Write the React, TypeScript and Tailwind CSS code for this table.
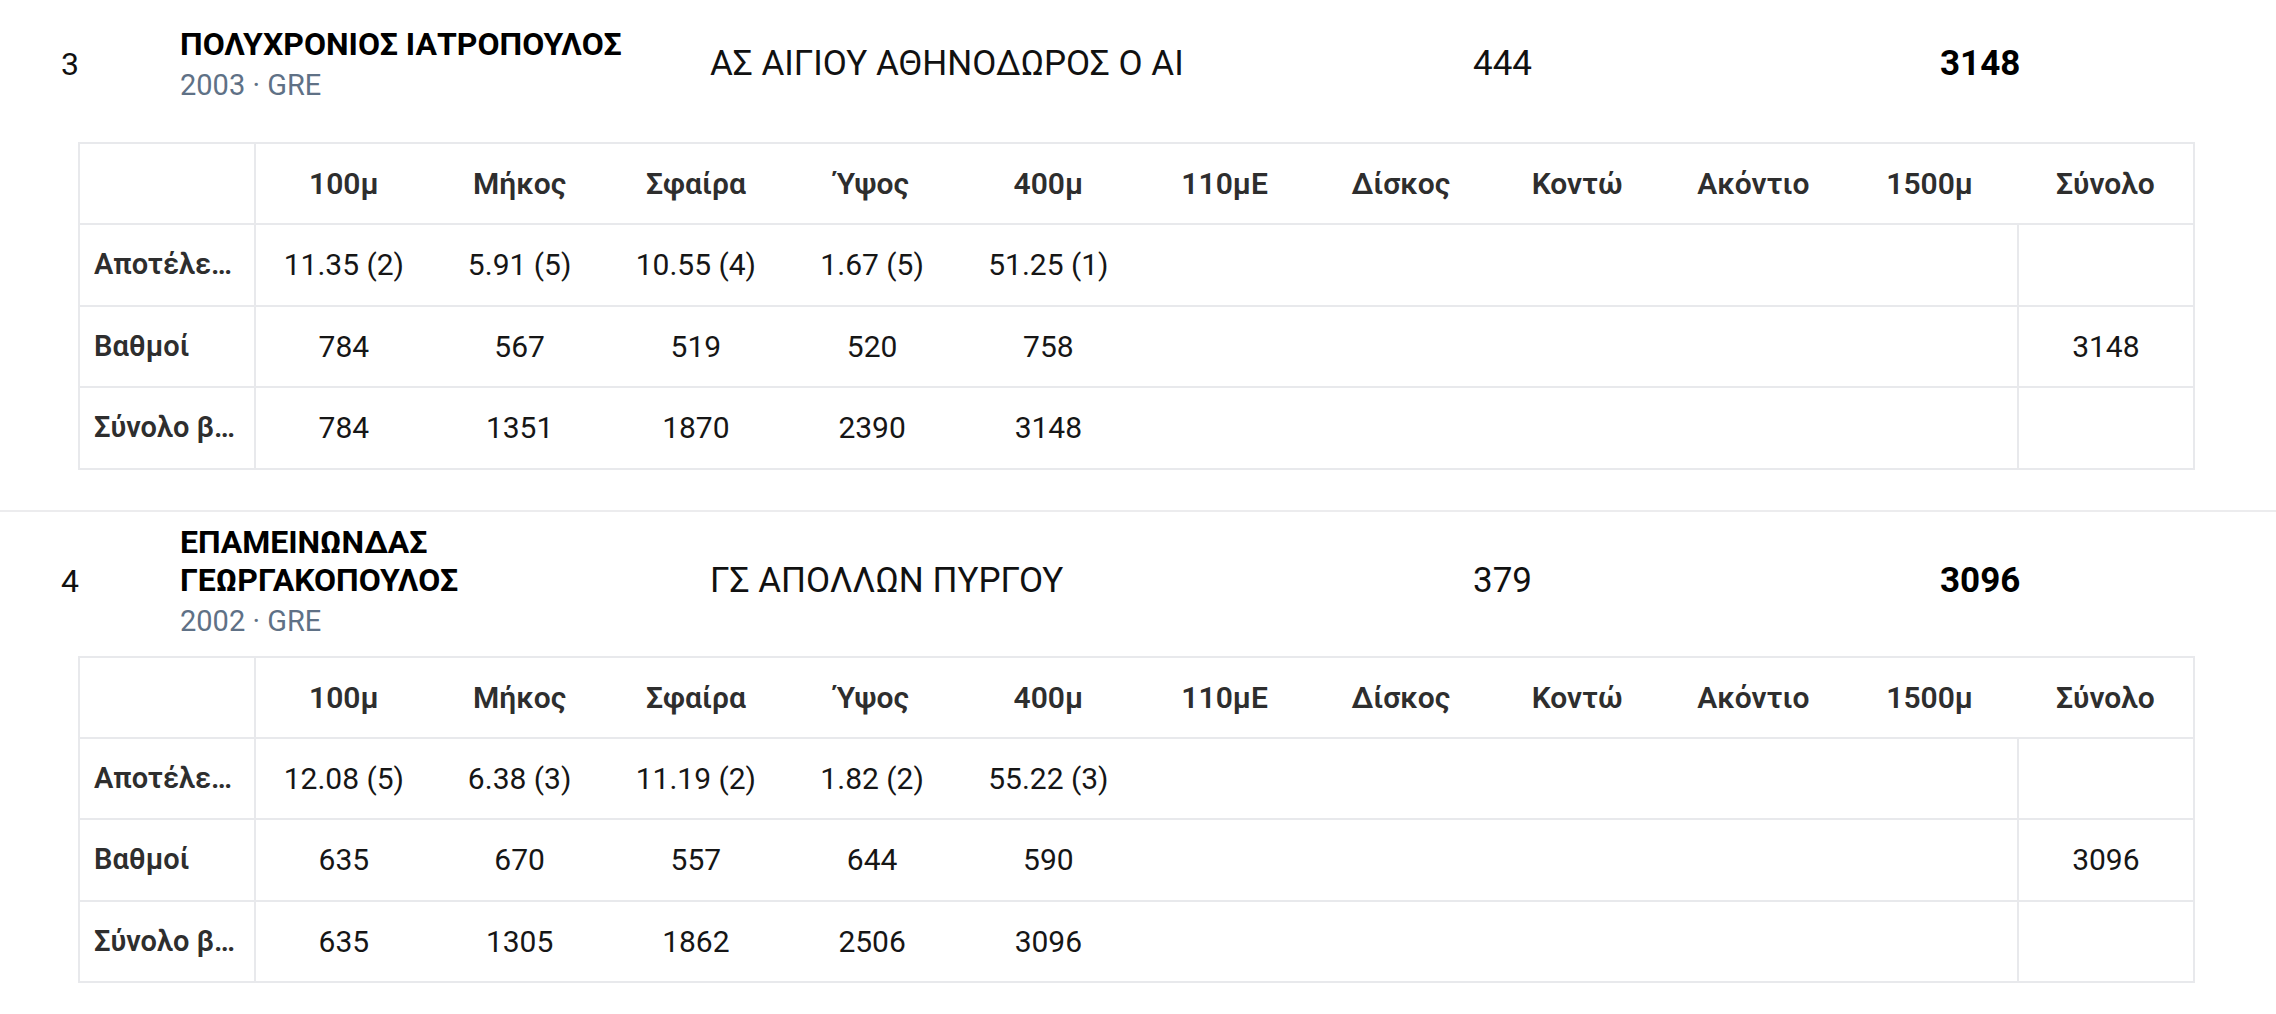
import { memo } from 'react';

interface Athlete {
  rank: number;
  name: string;
  year: number;
  nation: string;
  club: string;
  points: number;
  total: number;
  results: string[];
  scores: number[];
  cumulative: number[];
}

const EVENTS = ['100μ', 'Μήκος', 'Σφαίρα', 'Ύψος', '400μ', '110μΕ', 'Δίσκος', 'Κοντώ', 'Ακόντιο', '1500μ'];

const athletes: Athlete[] = [
  {
    rank: 3,
    name: 'ΠΟΛΥΧΡΟΝΙΟΣ ΙΑΤΡΟΠΟΥΛΟΣ',
    year: 2003,
    nation: 'GRE',
    club: 'ΑΣ ΑΙΓΙΟΥ ΑΘΗΝΟΔΩΡΟΣ Ο ΑΙ',
    points: 444,
    total: 3148,
    results: ['11.35 (2)', '5.91 (5)', '10.55 (4)', '1.67 (5)', '51.25 (1)'],
    scores: [784, 567, 519, 520, 758],
    cumulative: [784, 1351, 1870, 2390, 3148],
  },
  {
    rank: 4,
    name: 'ΕΠΑΜΕΙΝΩΝΔΑΣ ΓΕΩΡΓΑΚΟΠΟΥΛΟΣ',
    year: 2002,
    nation: 'GRE',
    club: 'ΓΣ ΑΠΟΛΛΩΝ ΠΥΡΓΟΥ',
    points: 379,
    total: 3096,
    results: ['12.08 (5)', '6.38 (3)', '11.19 (2)', '1.82 (2)', '55.22 (3)'],
    scores: [635, 670, 557, 644, 590],
    cumulative: [635, 1305, 1862, 2506, 3096],
  },
];

const pad = (values: (string | number)[]) =>
  EVENTS.map((_, i) => (values[i] !== undefined ? String(values[i]) : ''));

const ScoreTable = ({ athlete }: { athlete: Athlete }) => {
  const rows = [
    { label: 'Αποτέλεσμα', cells: pad(athlete.results), total: '' },
    { label: 'Βαθμοί', cells: pad(athlete.scores), total: String(athlete.total) },
    { label: 'Σύνολο βαθμών', cells: pad(athlete.cumulative), total: '' },
  ];

  return (
    <table className="w-full table-fixed border-collapse border-2 border-[#e8e9ec]">
      <thead>
        <tr className="h-[81px] text-[30px]">
          <th className="border-r-2 border-b-2 border-[#e8e9ec]" />
          {EVENTS.map((ev) => (
            <th key={ev} className="border-b-2 border-[#e8e9ec] font-semibold text-[#2e2e2e] text-center">
              {ev}
            </th>
          ))}
          <th className="border-b-2 border-[#e8e9ec] font-semibold text-[#2e2e2e] text-center">Σύνολο</th>
        </tr>
      </thead>
      <tbody>
        {rows.map((row, ri) => (
          <tr key={row.label} className={`h-[81.5px] text-[30px] ${ri < rows.length - 1 ? 'border-b-2 border-[#e8e9ec]' : ''}`}>
            <td className="border-r-2 border-[#e8e9ec] px-[14px] text-[29px] font-semibold text-[#2e2e2e] truncate">
              {row.label}
            </td>
            {row.cells.map((c, i) => (
              <td key={i} className="text-center text-[#161616]">
                {c}
              </td>
            ))}
            <td className="border-l-2 border-[#e8e9ec] text-center text-[#161616]">{row.total}</td>
          </tr>
        ))}
      </tbody>
    </table>
  );
};

const AthleteBlock = memo(({ athlete, first }: { athlete: Athlete; first: boolean }) => {
  return (
    <section className={`pb-[40px] ${first ? '' : 'border-t-2 border-[#ececee]'}`}>
      <div className={`flex items-center min-h-[126px] ${first ? 'pt-[2px]' : 'pt-[11px]'}`}>
        <div className="w-[140px] text-center text-[32px] text-[#111]">{athlete.rank}</div>
        <div className="ml-[40px] w-[490px]">
          <div className="text-[32px] leading-[38px] font-bold text-black">{athlete.name}</div>
          <div className="mt-[3px] text-[29px] leading-[38px] text-[#5f7186]">
            {athlete.year} · {athlete.nation}
          </div>
        </div>
        <div className="ml-[40px] w-[763px] text-[35px] text-[#111]">{athlete.club}</div>
        <div className="w-[467px] text-[35px] text-[#111]">{athlete.points}</div>
        <div className="text-[35px] font-bold text-black">{athlete.total}</div>
      </div>
      <div className="mt-[16px] pl-[78px] pr-[81px]">
        <ScoreTable athlete={athlete} />
      </div>
    </section>
  );
});

AthleteBlock.displayName = 'AthleteBlock';

export default function App() {
  return (
    <div className="min-h-screen bg-white font-['Roboto',sans-serif]">
      {athletes.map((a, i) => (
        <AthleteBlock key={a.rank} athlete={a} first={i === 0} />
      ))}
    </div>
  );
}
